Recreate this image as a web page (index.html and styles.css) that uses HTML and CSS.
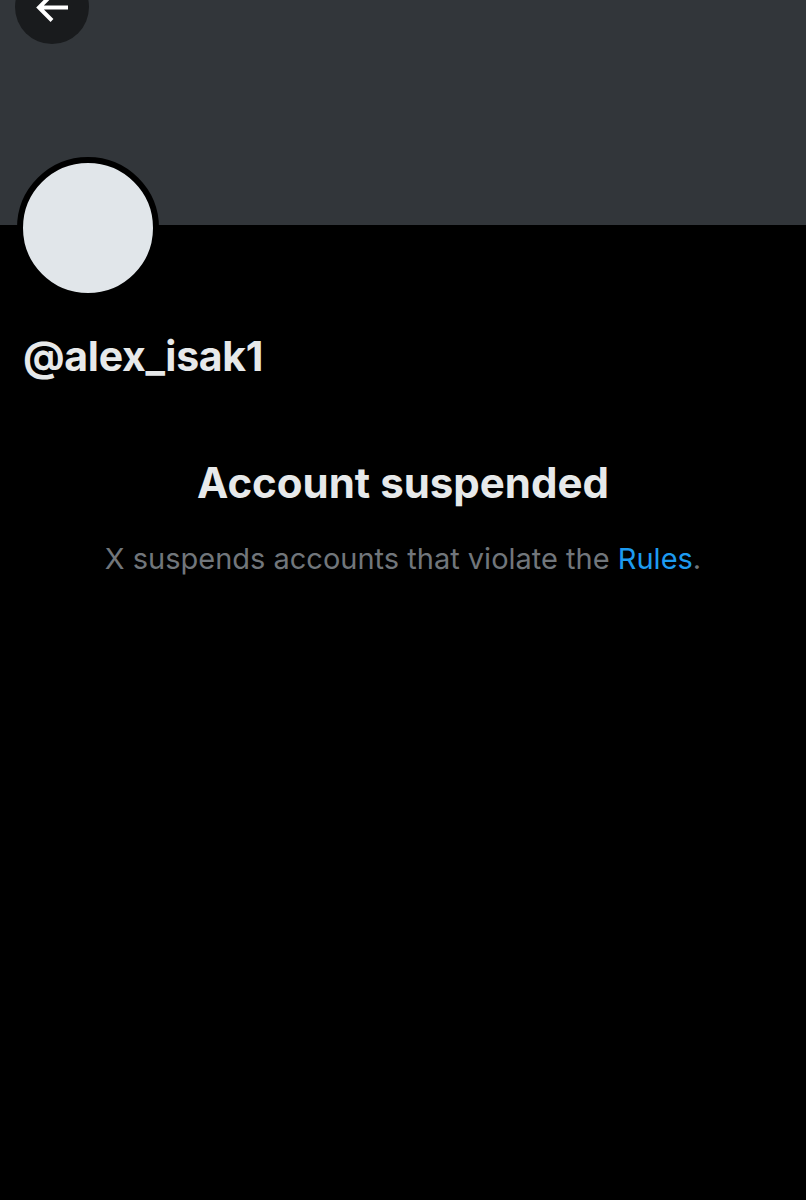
FILE: index.html
```html
<!DOCTYPE html>
<html lang="en">
<head>
    <meta charset="UTF-8">
    <meta name="viewport" content="width=device-width, initial-scale=1.0">
    <title>Account suspended</title>
    <link rel="stylesheet" href="styles.css">
</head>
<body>

<div class="banner">
    <button class="back-btn" aria-label="Back">
        <svg viewBox="0 0 36 36" width="36" height="36">
            <path d="M34 18.5H6M18 5.5L5 18.5L18 31.5" fill="none" stroke="#fff" stroke-width="4"/>
        </svg>
    </button>
</div>

<div class="profile">
    <div class="avatar"></div>
    <div class="handle">@alex_isak1</div>
</div>

<div class="suspended">
    <h2>Account suspended</h2>
    <p>X suspends accounts that violate the <a href="#">Rules</a>.</p>
</div>

</body>
</html>
```

FILE: styles.css
```css
body {
    margin: 0;
    background-color: #000;
    font-family: Inter, "Noto Sans", sans-serif;
    color: #e7e9ea;
    height: 1200px;
    overflow: hidden;
}
.banner {
    position: relative;
    height: 225px;
    background-color: #32363a;
}
.back-btn {
    position: absolute;
    left: 15px;
    top: -30px;
    width: 74px;
    height: 74px;
    border-radius: 50%;
    border: none;
    background-color: #191b1d;
    display: flex;
    align-items: center;
    justify-content: center;
    padding: 0 0 0 0;
}
.profile {
    padding: 0 23px;
}
.avatar {
    position: relative;
    width: 130px;
    height: 130px;
    border-radius: 50%;
    background-color: #e1e6ea;
    border: 6px solid #000;
    margin: -68px 0 0 -6px;
}
.handle {
    font-size: 41px;
    font-weight: 700;
    margin-top: 32px;
    letter-spacing: -0.3px;
}
.suspended {
    text-align: center;
    margin-top: 76px;
}
.suspended h2 {
    margin: 0;
    font-size: 42px;
    font-weight: 700;
}
.suspended p {
    margin: 33px 0 0;
    font-size: 29px;
    color: #71767b;
}
.suspended a {
    color: #1d9bf0;
    text-decoration: none;
}
```
